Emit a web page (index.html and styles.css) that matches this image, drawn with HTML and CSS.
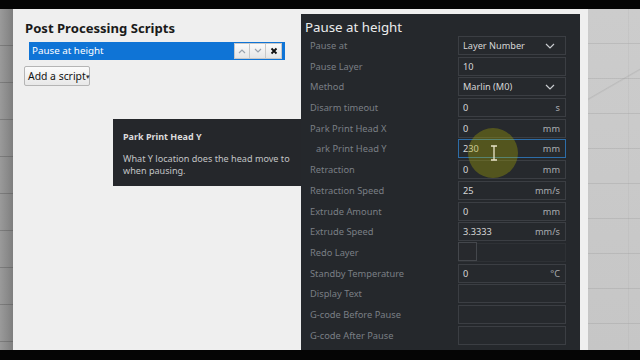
FILE: index.html
```html
<!DOCTYPE html>
<html>
<head>
<meta charset="utf-8">
<link rel="stylesheet" href="styles.css">
</head>
<body>
<div class="bar-top"></div>
<div class="stage">
  <div class="vp-left"></div>
  <div class="dialog">
    <div class="scripts">
      <h1 class="title">Post Processing Scripts</h1>
      <div class="script-row">
        <span class="script-name">Pause at height</span>
        <div class="row-btns">
          <span class="rbtn"><svg width="8" height="6" viewBox="0 0 8 6"><path d="M1 5 L4 2 L7 5" fill="none" stroke="#9aa3ad" stroke-width="1.2"/></svg></span>
          <span class="rbtn"><svg width="8" height="6" viewBox="0 0 8 6"><path d="M1 1 L4 4 L7 1" fill="none" stroke="#9aa3ad" stroke-width="1.2"/></svg></span>
          <span class="rbtn"><svg width="8" height="8" viewBox="0 0 8 8"><path d="M1.5 1.5 L6.5 6.5 M6.5 1.5 L1.5 6.5" fill="none" stroke="#111" stroke-width="1.8"/></svg></span>
        </div>
      </div>
      <button class="add-btn">Add a script<span class="caret">▾</span></button>
    </div>
    <div class="settings">
      <h2 class="settings-title">Pause at height</h2>
      <div class="rows">
        <div class="row"><span class="lbl">Pause at</span><div class="field select"><span>Layer Number</span><svg class="chev" width="10" height="6" viewBox="0 0 10 6"><path d="M1 1 L5 5 L9 1" fill="none" stroke="#c9ccd0" stroke-width="1.2"/></svg></div></div>
        <div class="row"><span class="lbl">Pause Layer</span><div class="field"><span>10</span></div></div>
        <div class="row"><span class="lbl">Method</span><div class="field select"><span>Marlin (M0)</span><svg class="chev" width="10" height="6" viewBox="0 0 10 6"><path d="M1 1 L5 5 L9 1" fill="none" stroke="#c9ccd0" stroke-width="1.2"/></svg></div></div>
        <div class="row"><span class="lbl">Disarm timeout</span><div class="field"><span>0</span><span class="unit">s</span></div></div>
        <div class="row"><span class="lbl">Park Print Head X</span><div class="field"><span>0</span><span class="unit">mm</span></div></div>
        <div class="row"><span class="lbl lbl-shift">ark Print Head Y</span><div class="field focus"><span>230</span><span class="unit">mm</span></div></div>
        <div class="row"><span class="lbl">Retraction</span><div class="field"><span>0</span><span class="unit">mm</span></div></div>
        <div class="row"><span class="lbl">Retraction Speed</span><div class="field"><span>25</span><span class="unit">mm/s</span></div></div>
        <div class="row"><span class="lbl">Extrude Amount</span><div class="field"><span>0</span><span class="unit">mm</span></div></div>
        <div class="row"><span class="lbl">Extrude Speed</span><div class="field"><span>3.3333</span><span class="unit">mm/s</span></div></div>
        <div class="row"><span class="lbl">Redo Layer</span><div class="field check-field"><span class="checkbox"></span></div></div>
        <div class="row"><span class="lbl">Standby Temperature</span><div class="field"><span>0</span><span class="unit">°C</span></div></div>
        <div class="row"><span class="lbl">Display Text</span><div class="field"></div></div>
        <div class="row"><span class="lbl">G-code Before Pause</span><div class="field"></div></div>
        <div class="row"><span class="lbl">G-code After Pause</span><div class="field"></div></div>
      </div>
    </div>
  </div>
  <div class="vp-right"></div>
  <div class="tooltip">
    <div class="tt-title">Park Print Head Y</div>
    <div class="tt-body">What Y location does the head move to when pausing.</div>
  </div>
  <div class="highlight"></div>
  <svg class="ibeam" width="8" height="16" viewBox="0 0 8 16"><path d="M1 1 H7 M4 1 V15 M1 15 H7" fill="none" stroke="#e8e4c8" stroke-width="1.3"/></svg>
</div>
<div class="bar-bottom"></div>
</body>
</html>
```
FILE: styles.css
```css
* { box-sizing: border-box; }
html, body { margin: 0; padding: 0; }
body {
  width: 640px;
  height: 360px;
  background: #000;
  font-family: "Noto Sans", "Open Sans", sans-serif;
  overflow: hidden;
}
.bar-top { height: 9px; background: #050505; }
.bar-bottom { height: 10px; background: #050505; }
.stage {
  position: relative;
  height: 341px;
  display: flex;
}
.vp-left {
  width: 13px;
  background:
    repeating-linear-gradient(180deg, transparent 0 36px, rgba(60,60,60,0.3) 36px 37px),
    linear-gradient(90deg, #9a9a9a, #8a8a8a 60%, #7e7e7e);
}
.dialog {
  width: 575px;
  background: #efefef;
  display: flex;
  padding: 5px 8px 0 0;
}
.scripts {
  width: 288px;
  padding: 5px 0 0 11px;
  flex: none;
}
.title {
  margin: 0 0 0 1px;
  font-size: 13.1px;
  line-height: 18px;
  font-weight: 700;
  color: #1a1a1a;
}
.script-row {
  margin: 5px 0 0 5px;
  width: 256px;
  height: 18px;
  background: #0f74d6;
  display: flex;
  align-items: center;
  justify-content: space-between;
  padding: 0 3px 0 3px;
}
.script-name {
  color: #fff;
  font-size: 9.8px;
  line-height: 18px;
}
.row-btns { display: flex; height: 16px; }
.rbtn {
  width: 16px;
  height: 16px;
  background: linear-gradient(#fafafa, #e6e6e6);
  border: 1px solid #c8c8c8;
  display: flex;
  align-items: center;
  justify-content: center;
}
.rbtn + .rbtn { border-left: none; }
.add-btn {
  margin-top: 6px;
  height: 20px;
  width: 66px;
  padding: 0 0 0 3px;
  border: 1px solid #b5b5b5;
  border-radius: 2px;
  background: linear-gradient(#fbfbfb, #e8e8e8);
  font-family: "Noto Sans", sans-serif;
  font-size: 10.4px;
  color: #111;
  text-align: left;
  display: flex;
  align-items: center;
  white-space: nowrap;
}
.caret { font-size: 7px; margin-left: 0; color: #333; }
.settings {
  flex: 1;
  background: #25282c;
  padding: 4px 14px 0 4px;
}
.settings-title {
  margin: 0;
  padding-top: 1px;
  font-size: 13.3px;
  line-height: 17px;
  font-weight: 400;
  color: #ececec;
}
.rows {
  display: flex;
  flex-direction: column;
  gap: 1.7px;
}
.row {
  display: flex;
  align-items: center;
  height: 19px;
  padding-left: 5px;
}
.lbl {
  width: 148px;
  font-size: 9.3px;
  color: #7a7f85;
  white-space: nowrap;
}
.lbl-shift { padding-left: 6px; }
.field {
  width: 108px;
  height: 19px;
  border: 1px solid #3b3e43;
  background: #26292d;
  display: flex;
  align-items: center;
  justify-content: space-between;
  padding: 0 5px 0 4px;
  font-size: 9.2px;
  color: #d6d6d6;
}
.unit { color: #a9acb0; }
.select .chev { margin-right: 5px; }
.focus { border-color: #2d6da8; }
.check-field { padding: 0; border-color: #2e3135; }
.checkbox {
  width: 19px;
  height: 19px;
  margin: -1px 0 0 -1px;
  border: 1px solid #44474c;
  background: #27292d;
}
.vp-right {
  flex: 1;
  background:
    linear-gradient(150deg, transparent 0 24%, rgba(130,130,130,0.2) 24.3%, transparent 24.8%),
    repeating-linear-gradient(180deg, transparent 0 34px, rgba(140,140,140,0.25) 34px 35px),
    repeating-linear-gradient(90deg, transparent 0 40px, rgba(160,160,160,0.15) 40px 41px),
    linear-gradient(180deg, #cccccc, #c6c6c6);
}
.tooltip {
  position: absolute;
  left: 113px;
  top: 110px;
  width: 188px;
  height: 67px;
  background: #25272b;
  padding: 12px 2px 0 10px;
  color: #d6d6d6;
}
.tt-title {
  font-size: 9px;
  font-weight: 700;
  line-height: 12px;
  color: #dcdcdc;
}
.tt-body {
  margin-top: 10px;
  font-size: 9.1px;
  line-height: 12px;
  color: #c2c4c6;
}
.highlight {
  position: absolute;
  left: 468px;
  top: 119px;
  width: 50px;
  height: 50px;
  border-radius: 50%;
  background: rgba(175, 175, 0, 0.33);
}
.ibeam {
  position: absolute;
  left: 490px;
  top: 136px;
}
```
